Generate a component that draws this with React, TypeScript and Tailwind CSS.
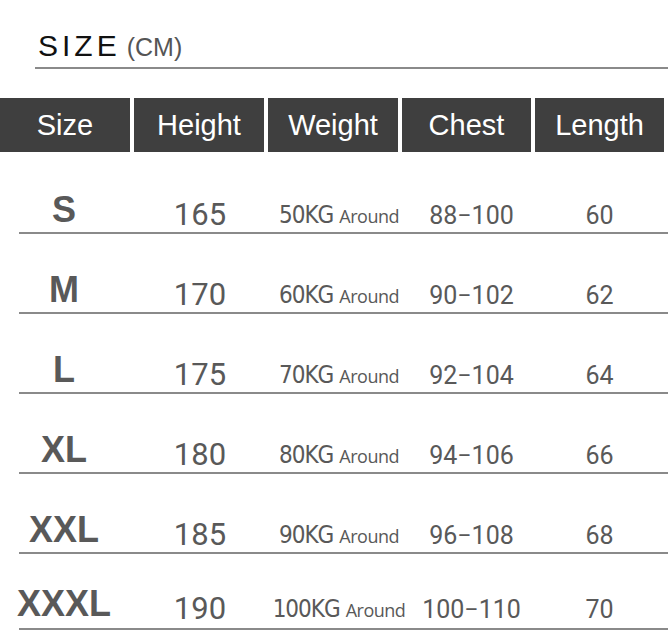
const headers = ["Size", "Height", "Weight", "Chest", "Length"];

const rows = [
  { size: "S", height: "165", kg: "50KG", chest: "88-100", length: "60" },
  { size: "M", height: "170", kg: "60KG", chest: "90-102", length: "62" },
  { size: "L", height: "175", kg: "70KG", chest: "92-104", length: "64" },
  { size: "XL", height: "180", kg: "80KG", chest: "94-106", length: "66" },
  { size: "XXL", height: "185", kg: "90KG", chest: "96-108", length: "68" },
  { size: "XXXL", height: "190", kg: "100KG", chest: "100-110", length: "70" },
];

const cols = ["w-[130px]", "w-[130px]", "w-[130px]", "w-[129px]", "w-[129px]"];

export default function App() {
  return (
    <div className="w-[668px] h-[633px] bg-white overflow-hidden font-['Liberation_Sans',sans-serif]">
      {/* title */}
      <div className="pt-[28px] pl-[38px] flex items-baseline gap-[6px]">
        <span className="text-[30px] leading-[36px] tracking-[4px] text-[#111]">SIZE</span>
        <span className="text-[25px] leading-[36px] text-[#555]">(CM)</span>
      </div>
      <div className="ml-[35px] mt-[2px] h-[2px] bg-[#8a8a8a]" />

      {/* header */}
      <div className="mt-[29px] flex gap-[4px]">
        {headers.map((h, i) => (
          <div
            key={h}
            className={`${cols[i]} h-[54px] bg-[#3f3f3f] flex items-center justify-center text-white text-[29px] pt-[2px]`}
          >
            {h}
          </div>
        ))}
      </div>

      {/* rows */}
      <div className="mt-[2px]">
        {rows.map((r, idx) => (
          <div key={r.size}>
            <div
              className={`${idx === 5 ? "h-[74px] pb-[2px]" : "h-[78px] pb-0"} flex gap-[4px] items-end text-[#595959]`}
            >
              <div className="w-[130px] text-center font-bold text-[36px] leading-[40px] pb-[2px] pr-[2px]">{r.size}</div>
              <div className="w-[130px] text-center font-['Roboto',sans-serif] text-[31px] leading-[34px] pl-[2px]">
                {r.height}
              </div>
              <div className="w-[130px] flex items-baseline justify-center whitespace-nowrap leading-[32px] pl-[12px]">
                <span className="font-['DejaVu_Sans_Condensed','DejaVu_Sans',sans-serif] text-[24px] tracking-[-1px]">
                  {r.kg}
                </span>
                <span className="ml-[6px] text-[18px] font-['Open_Sans',sans-serif] tracking-[-0.5px]">Around</span>
              </div>
              <div className="w-[129px] text-center font-['Roboto',sans-serif] text-[25px] leading-[32px] pl-[10px]">
                {r.chest.replace("-", "\u2212")}
              </div>
              <div className="w-[129px] text-center font-['Roboto',sans-serif] text-[25px] leading-[32px]">
                {r.length}
              </div>
            </div>
            <div className="ml-[19px] h-[2px] bg-[#8a8a8a]" />
          </div>
        ))}
      </div>
    </div>
  );
}
